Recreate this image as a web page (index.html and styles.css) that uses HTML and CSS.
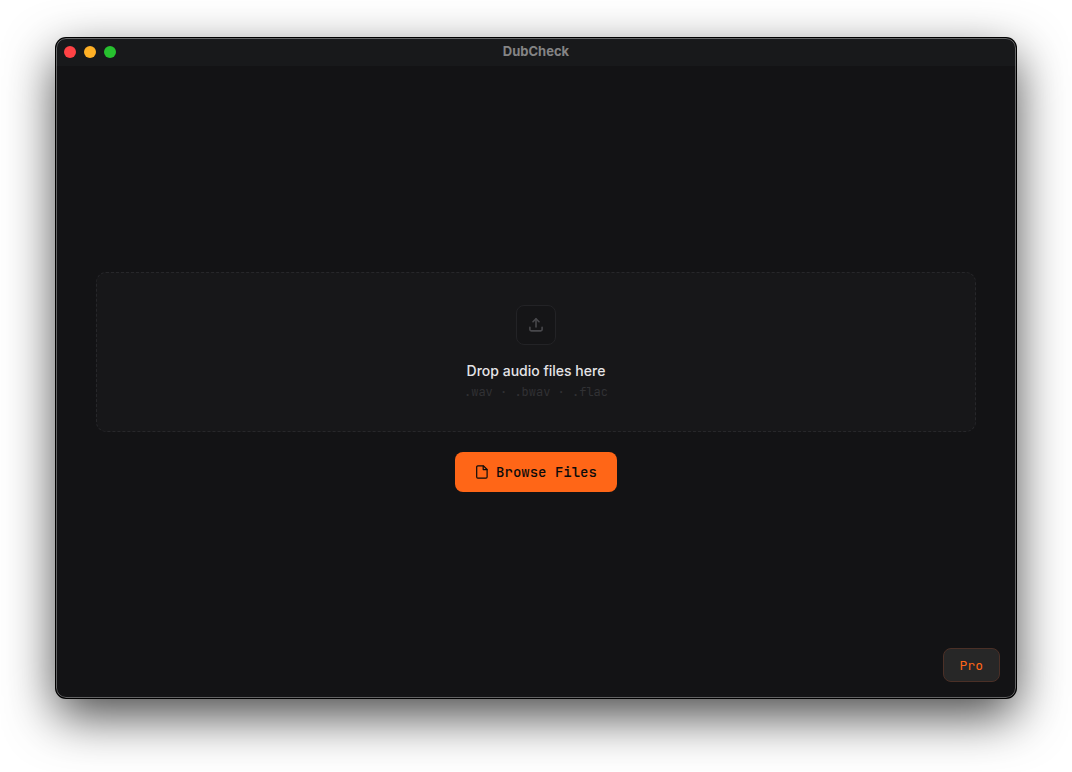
FILE: index.html
```html
<!DOCTYPE html>
<html lang="en">
<head>
    <meta charset="UTF-8">
    <meta name="viewport" content="width=device-width, initial-scale=1.0">
    <title>DubCheck</title>
    <link rel="stylesheet" href="styles.css">
</head>
<body>
    <div class="window">
        <header class="titlebar">
            <div class="traffic-lights">
                <button type="button" class="light close" aria-label="Close"></button>
                <button type="button" class="light minimize" aria-label="Minimize"></button>
                <button type="button" class="light zoom" aria-label="Zoom"></button>
            </div>
            <h1 class="title">DubCheck</h1>
        </header>

        <main class="content">
            <div class="drop-zone">
                <div class="drop-icon">
                    <svg width="16" height="16" viewBox="0 0 16 16" fill="none" stroke="currentColor" stroke-width="1.6" stroke-linecap="round" stroke-linejoin="round" aria-hidden="true">
                        <path d="M8 10V2"/>
                        <path d="M5 4.7L8 1.7L11 4.7"/>
                        <path d="M1.9 10.3V12.6C1.9 13.4 2.4 13.9 3.2 13.9H12.8C13.6 13.9 14.1 13.4 14.1 12.6V10.3"/>
                    </svg>
                </div>
                <p class="drop-title">Drop audio files here</p>
                <p class="drop-formats">.wav · .bwav · .flac</p>
            </div>
            <button type="button" class="browse-btn">
                <svg width="14" height="14" viewBox="0 0 14 14" fill="none" stroke="currentColor" stroke-width="1.2" stroke-linecap="round" stroke-linejoin="round" aria-hidden="true">
                    <path d="M8.5 .9H2.8C2.1 .9 1.7 1.3 1.7 2V12C1.7 12.7 2.1 13.1 2.8 13.1H11C11.7 13.1 12.1 12.7 12.1 12V4.5L8.5 .9Z"/>
                    <path d="M8.2 1V4.6H12"/>
                </svg>
                Browse Files
            </button>
        </main>

        <button type="button" class="pro-btn">Pro</button>
    </div>
</body>
</html>
```

FILE: styles.css
```css
* {
    box-sizing: border-box;
}
body {
    display: flex;
    min-height: 100vh;
    margin: 0;
    padding: 38px 56px 74px;
    background-color: #fff;
    font-family: Inter, sans-serif;
}
h1, p {
    margin: 0;
}
button {
    border: none;
    font-family: "JetBrains Mono", "DejaVu Sans Mono", monospace;
    cursor: pointer;
}
.window {
    position: relative;
    display: flex;
    flex-direction: column;
    flex: 1;
    overflow: hidden;
    border-radius: 10px;
    background-color: #131315;
    box-shadow: 0 0 0 1px #000, 0 18px 50px rgba(0,0,0,0.72);
}
/* light rim on the inside of the window edge */
.window::after {
    content: "";
    position: absolute;
    inset: 0;
    border: 1px solid rgba(255,255,255,0.34);
    border-radius: 10px;
    pointer-events: none;
}
.titlebar {
    display: grid;
    grid-template-columns: 1fr auto 1fr;
    align-items: center;
    height: 28px;
    padding: 0 8px;
    background-color: #18191b;
}
.traffic-lights {
    display: flex;
    gap: 8px;
}
.light {
    width: 12px;
    height: 12px;
    padding: 0;
    border-radius: 50%;
}
.close {
    background-color: #ff4245;
}
.minimize {
    background-color: #ffb025;
}
.zoom {
    background-color: #27c12f;
}
.title {
    padding-bottom: 2px;
    color: #848485;
    font-size: 13px;
    font-weight: 700;
    line-height: 16px;
}
.content {
    display: flex;
    flex: 1;
    flex-direction: column;
    align-items: center;
    justify-content: center;
    gap: 20px;
    padding: 0 40px;
}
.drop-zone {
    display: flex;
    flex-direction: column;
    align-items: center;
    align-self: stretch;
    padding: 32px;
    border: 1px dashed #27272a;
    border-radius: 10px;
    background-color: #171719;
}
.drop-icon {
    display: flex;
    align-items: center;
    justify-content: center;
    width: 40px;
    height: 40px;
    margin-bottom: 16px;
    border: 1px solid #232326;
    border-radius: 8px;
    background-color: #151517;
    color: #48484c;
}
.drop-title {
    color: #e4e4e7;
    font-size: 14px;
    font-weight: 500;
    line-height: 20px;
}
.drop-formats {
    color: #313134;
    font-family: "JetBrains Mono", "DejaVu Sans Mono", monospace;
    font-size: 12px;
    line-height: 18px;
    padding-top: 2px;
    margin-bottom: -2px;
}
.browse-btn {
    display: flex;
    align-items: center;
    gap: 7px;
    height: 40px;
    padding: 0 20px;
    border-radius: 8px;
    background-color: #ff6617;
    color: #0a0a0b;
    font-size: 14px;
    font-weight: 500;
}
.pro-btn {
    position: absolute;
    right: 16px;
    bottom: 16px;
    height: 34px;
    padding: 0 16px;
    border: 1px solid #4b3027;
    border-radius: 8px;
    background-color: #272727;
    color: #ff6617;
    font-size: 13px;
}
```
